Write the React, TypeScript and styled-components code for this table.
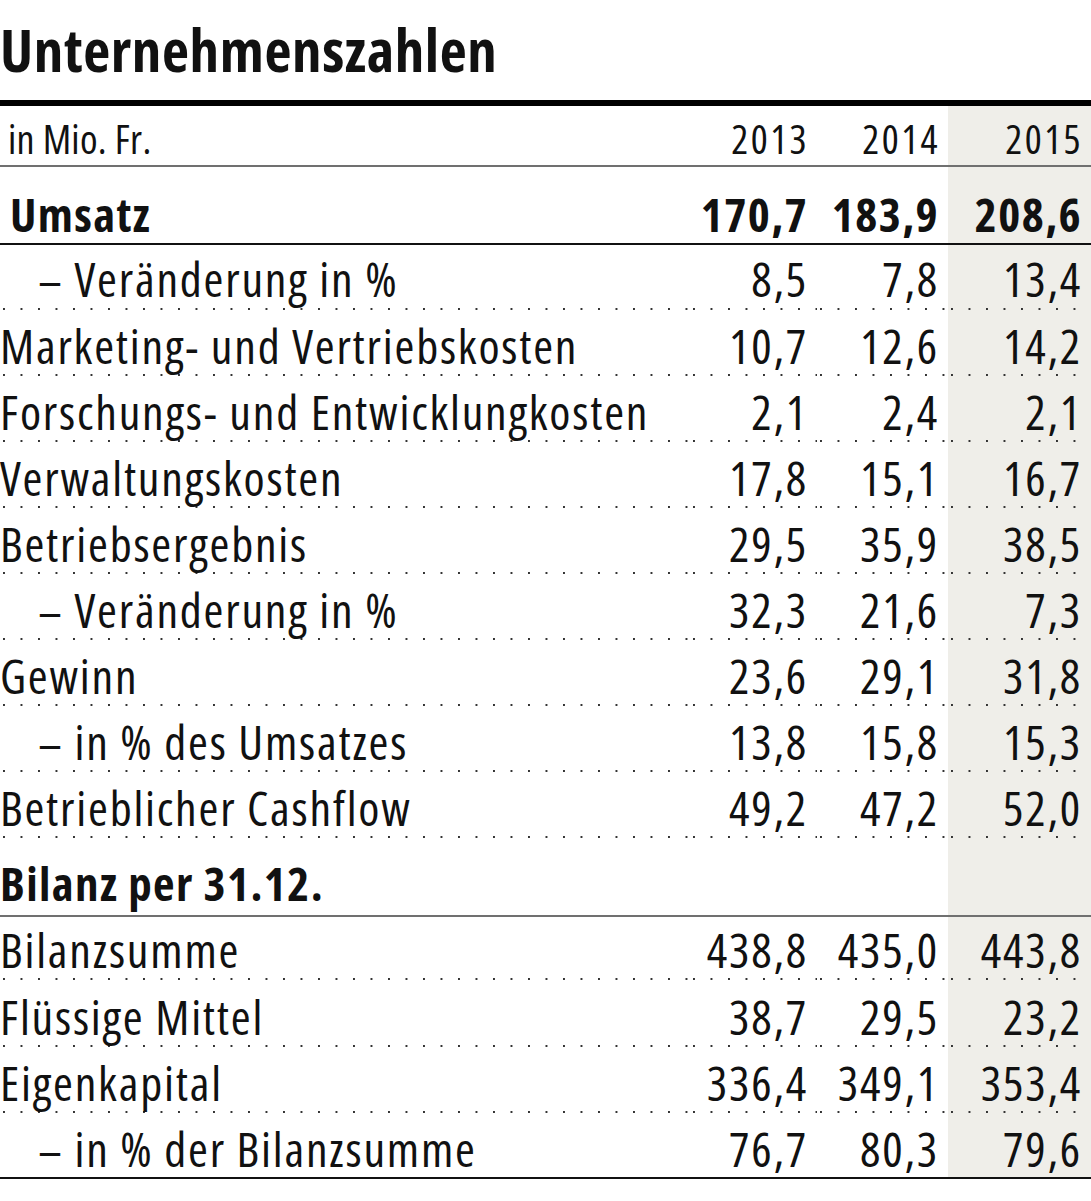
import React from "react";
import styled, { createGlobalStyle, css } from "styled-components";

const Global = createGlobalStyle`
  html, body { margin: 0; padding: 0; background: #fff; }
  body {
    font-family: "Open Sans", "DejaVu Sans Condensed", "Liberation Sans", sans-serif;
    font-stretch: 75%;
    color: #111;
  }
`;

const SHADE = "#efeee9";

const Page = styled.div`
  width: 1091px;
  padding-bottom: 16px;
`;

const TitleBar = styled.header`
  height: 100px;
  display: flex;
  align-items: flex-end;
  border-bottom: 6px solid #000;
`;

const Title = styled.h1`
  margin: 0 0 21px 0;
  font-size: 59px;
  line-height: 1;
  font-weight: 700;
  letter-spacing: 0.6px;
`;

type RuleKind = "dots" | "gray" | "black" | "none";

const ruleCss = (r: RuleKind) => {
  switch (r) {
    case "gray":
      return css`border-bottom: 2px solid #707070;`;
    case "black":
      return css`border-bottom: 2px solid #111;`;
    case "dots":
      return css`
        border-bottom: 2px solid transparent;
        background-image: linear-gradient(to right, #333 0 2px, transparent 2px);
        background-size: 17.5px 2px;
        background-repeat: repeat-x;
        background-origin: border-box;
        background-position: 3px 100%;
      `;
    default:
      return css``;
  }
};

type TextKind = "body" | "bold" | "head";

const textCss = (k: TextKind) => {
  switch (k) {
    case "bold":
      return css`
        font-size: 47px;
        font-weight: 700;
        letter-spacing: 1.4px;
      `;
    case "head":
      return css`
        font-size: 40px;
        font-weight: 400;
        letter-spacing: 0.3px;
      `;
    default:
      return css`
        font-size: 48px;
        font-weight: 400;
        letter-spacing: 1.8px;
      `;
  }
};

const Row = styled.div<{ $height: number }>`
  display: grid;
  grid-template-columns: minmax(0, 1fr) 127px 131px 143px;
  height: ${(p) => p.$height}px;
`;

const Cell = styled.div<{ $rule: RuleKind; $shaded?: boolean; $pad: number; $kind: TextKind }>`
  display: flex;
  align-items: flex-end;
  box-sizing: border-box;
  padding-bottom: ${(p) => p.$pad}px;
  background-color: ${(p) => (p.$shaded ? SHADE : "transparent")};
  line-height: 1;
  white-space: nowrap;
  ${(p) => textCss(p.$kind)}
  ${(p) => ruleCss(p.$rule)}
`;

const Label = styled(Cell)<{ $indent: number }>`
  padding-left: ${(p) => p.$indent}px;
`;

const Value = styled(Cell)`
  justify-content: flex-end;
  padding-right: 9px;
  ${(p) =>
    p.$kind === "head" &&
    css`
      letter-spacing: 2.4px;
      padding-right: 8px;
    `}
`;

type RowData = {
  label: string;
  values?: [string, string, string];
  indent?: number;
  kind?: TextKind;
  height: number;
  rule: RuleKind;
  pad?: number;
};

const rows: RowData[] = [
  { label: "in Mio. Fr.", values: ["2013", "2014", "2015"], indent: 8, kind: "head", height: 61, rule: "gray", pad: 6 },
  { label: "Umsatz", values: ["170,7", "183,9", "208,6"], indent: 10, kind: "bold", height: 78, rule: "black", pad: 5 },
  { label: "– Veränderung in %", values: ["8,5", "7,8", "13,4"], indent: 38, height: 65, rule: "dots", pad: 5 },
  { label: "Marketing- und Vertriebskosten", values: ["10,7", "12,6", "14,2"], height: 66, rule: "dots" },
  { label: "Forschungs- und Entwicklungkosten", values: ["2,1", "2,4", "2,1"], height: 66, rule: "dots" },
  { label: "Verwaltungskosten", values: ["17,8", "15,1", "16,7"], height: 66, rule: "dots" },
  { label: "Betriebsergebnis", values: ["29,5", "35,9", "38,5"], height: 66, rule: "dots" },
  { label: "– Veränderung in %", values: ["32,3", "21,6", "7,3"], indent: 38, height: 66, rule: "dots" },
  { label: "Gewinn", values: ["23,6", "29,1", "31,8"], height: 66, rule: "dots" },
  { label: "– in % des Umsatzes", values: ["13,8", "15,8", "15,3"], indent: 38, height: 66, rule: "dots" },
  { label: "Betrieblicher Cashflow", values: ["49,2", "47,2", "52,0"], height: 66, rule: "dots" },
  { label: "Bilanz per 31.12.", kind: "bold", height: 79, rule: "gray", pad: 8 },
  { label: "Bilanzsumme", values: ["438,8", "435,0", "443,8"], height: 63, rule: "dots" },
  { label: "Flüssige Mittel", values: ["38,7", "29,5", "23,2"], height: 67, rule: "dots" },
  { label: "Eigenkapital", values: ["336,4", "349,1", "353,4"], height: 66, rule: "dots" },
  { label: "– in % der Bilanzsumme", values: ["76,7", "80,3", "79,6"], indent: 38, height: 66, rule: "black" },
];

export default function App() {
  return (
    <Page>
      <Global />
      <TitleBar>
        <Title>Unternehmenszahlen</Title>
      </TitleBar>
      {rows.map((r, i) => {
        const kind = r.kind ?? "body";
        const pad = r.pad ?? 4;
        const vals = r.values ?? ["", "", ""];
        return (
          <Row key={i} $height={r.height}>
            <Label $rule={r.rule} $pad={pad} $indent={r.indent ?? 0} $kind={kind}>
              {r.label}
            </Label>
            {vals.map((v, j) => (
              <Value key={j} $rule={r.rule} $pad={pad} $kind={kind} $shaded={j === 2}>
                {v}
              </Value>
            ))}
          </Row>
        );
      })}
    </Page>
  );
}
